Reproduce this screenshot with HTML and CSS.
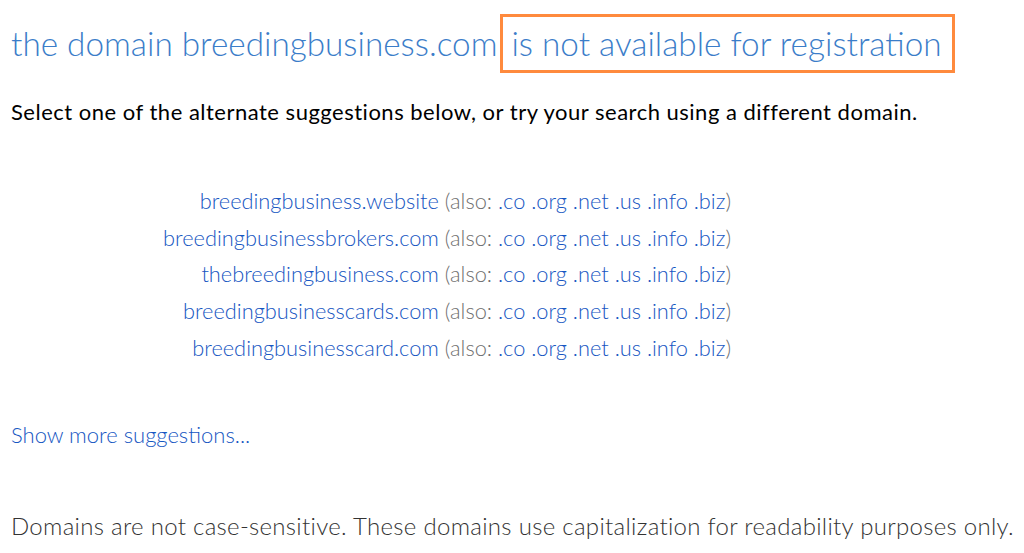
FILE: index.html
```html
<!DOCTYPE html>
<html lang="en">
<head>
  <meta charset="UTF-8" />
  <meta name="viewport" content="width=device-width, initial-scale=1.0"/>
  <title>Domain search results</title>
  <link rel="stylesheet" href="styles.css">
</head>
<body>
  <h1 class="result-title">
    <span>the domain breedingbusiness.com</span><span class="unavailable">is not available for registration</span>
  </h1>

  <p class="lead">Select one of the alternate suggestions below, or try your search using a different domain.</p>

  <ul class="suggestions">
    <li><a href="#">breedingbusiness.website</a> <span class="also">(also: <a href="#">.co</a> <a href="#">.org</a> <a href="#">.net</a> <a href="#">.us</a> <a href="#">.info</a> <a href="#">.biz</a>)</span></li>
    <li><a href="#">breedingbusinessbrokers.com</a> <span class="also">(also: <a href="#">.co</a> <a href="#">.org</a> <a href="#">.net</a> <a href="#">.us</a> <a href="#">.info</a> <a href="#">.biz</a>)</span></li>
    <li><a href="#">thebreedingbusiness.com</a> <span class="also">(also: <a href="#">.co</a> <a href="#">.org</a> <a href="#">.net</a> <a href="#">.us</a> <a href="#">.info</a> <a href="#">.biz</a>)</span></li>
    <li><a href="#">breedingbusinesscards.com</a> <span class="also">(also: <a href="#">.co</a> <a href="#">.org</a> <a href="#">.net</a> <a href="#">.us</a> <a href="#">.info</a> <a href="#">.biz</a>)</span></li>
    <li><a href="#">breedingbusinesscard.com</a> <span class="also">(also: <a href="#">.co</a> <a href="#">.org</a> <a href="#">.net</a> <a href="#">.us</a> <a href="#">.info</a> <a href="#">.biz</a>)</span></li>
  </ul>

  <a class="more" href="#">Show more suggestions...</a>

  <p class="note">Domains are not case-sensitive. These domains use capitalization for readability purposes only.</p>
</body>
</html>
```

FILE: styles.css
```css
body {
  font-family: Lato, "Open Sans", sans-serif;
  margin: 0;
  padding: 0 11px;
  background: #fff;
  color: #222;
}
a {
  color: #1656c2;
  text-decoration: none;
}
.result-title {
  margin: 14px 0 0;
  font-size: 33.3px;
  font-weight: 300;
  line-height: 50px;
  color: #3b7dc9;
  white-space: nowrap;
}
.unavailable {
  display: inline-block;
  margin-left: 3px;
  padding: 1px 10px 2px 8px;
  border: 3px solid #ff8a3d;
}
.lead {
  margin: 25px 0 0;
  font-size: 22px;
  font-weight: 400;
  letter-spacing: 0.5px;
  color: #000;
  white-space: nowrap;
}
.suggestions {
  list-style: none;
  margin: 58px 0 0;
  padding: 0;
  width: 720px;
  text-align: right;
  font-size: 21.8px;
  font-weight: 300;
  line-height: 36.7px;
}
.also {
  color: #707070;
}
.more {
  display: block;
  margin-top: 54px;
  font-size: 22px;
  font-weight: 300;
}
.note {
  margin: 63px 0 0;
  font-size: 24px;
  font-weight: 300;
  letter-spacing: 0.3px;
  color: #333;
  white-space: nowrap;
}
```
